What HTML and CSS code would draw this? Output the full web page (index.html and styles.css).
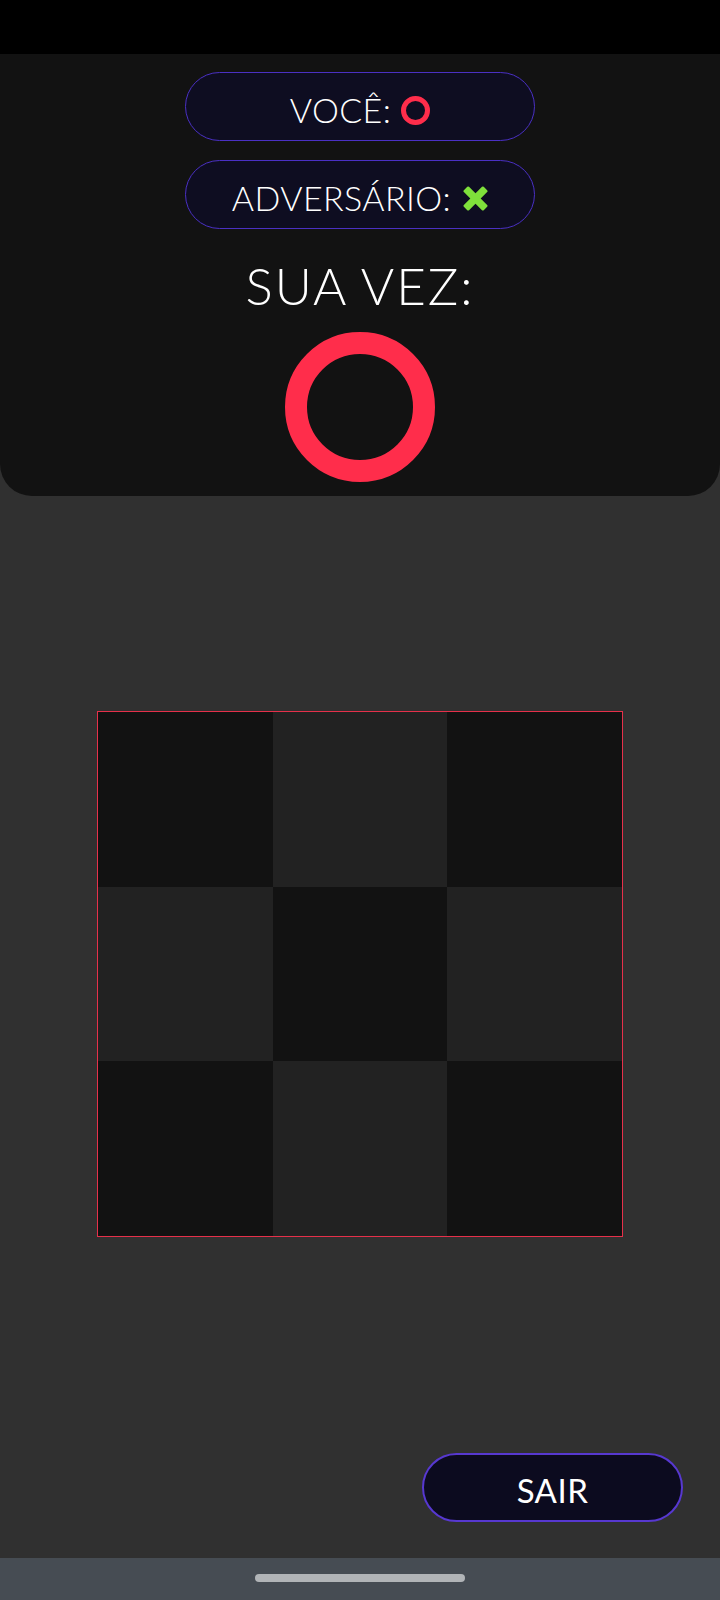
FILE: index.html
```html
<!DOCTYPE html>
<html lang="pt">
<head>
<meta charset="utf-8">
<link rel="stylesheet" href="styles.css">
</head>
<body>
<div class="screen">
  <div class="statusbar"></div>
  <header class="panel">
    <div class="pill">
      <span class="pill-text">VOCÊ:</span>
      <span class="mini-o"></span>
    </div>
    <div class="pill">
      <span class="pill-text">ADVERSÁRIO:</span>
      <svg class="mini-x" viewBox="0 0 24 24" width="25" height="25">
        <g fill="#7fe03b" transform="rotate(45 12 12)">
          <rect x="8.5" y="-1.5" width="7" height="27" rx="1.2"/>
          <rect x="-1.5" y="8.5" width="27" height="7" rx="1.2"/>
        </g>
      </svg>
    </div>
    <div class="turn-label">SUA VEZ:</div>
    <div class="big-o"></div>
  </header>
  <main class="main">
    <div class="board">
      <div class="cell dark"></div>
      <div class="cell light"></div>
      <div class="cell dark"></div>
      <div class="cell light"></div>
      <div class="cell dark"></div>
      <div class="cell light"></div>
      <div class="cell dark"></div>
      <div class="cell light"></div>
      <div class="cell dark"></div>
    </div>
    <button class="exit">SAIR</button>
  </main>
  <div class="navbar"><div class="handle"></div></div>
</div>
</body>
</html>
```
FILE: styles.css
```css
html, body {
  margin: 0;
  padding: 0;
  background: #303030;
}
.screen {
  width: 720px;
  height: 1600px;
  display: flex;
  flex-direction: column;
  background: #303030;
  font-family: "Lato", "Open Sans", sans-serif;
  color: #ffffff;
}
.statusbar {
  height: 54px;
  background: #000000;
  flex: none;
}
.panel {
  flex: none;
  height: 442px;
  box-sizing: border-box;
  background: #121212;
  border-radius: 0 0 32px 32px;
  display: flex;
  flex-direction: column;
  align-items: center;
  padding-top: 18px;
}
.pill {
  width: 350px;
  height: 69px;
  box-sizing: border-box;
  border: 1px solid #4a30c4;
  border-radius: 35px;
  background: #0e0d21;
  display: flex;
  align-items: center;
  justify-content: center;
  gap: 10px;
  padding-top: 7px;
  margin-bottom: 19px;
}
.pill-text {
  font-size: 34px;
  font-weight: 300;
  letter-spacing: 0.4px;
  line-height: 1;
}
.mini-o {
  width: 29px;
  height: 29px;
  box-sizing: border-box;
  border: 5px solid #ff2d4b;
  border-radius: 50%;
}
.mini-x {
  display: block;
  margin-left: 2px;
}
.turn-label {
  font-size: 51px;
  font-weight: 300;
  line-height: 1;
  margin-top: 12px;
  letter-spacing: 2px;
}
.big-o {
  width: 150px;
  height: 150px;
  box-sizing: border-box;
  border: 22px solid #ff2d4b;
  border-radius: 50%;
  margin-top: 21px;
}
.main {
  flex: 1;
  display: flex;
  flex-direction: column;
  align-items: center;
  padding-top: 215px;
}
.board {
  width: 526px;
  height: 526px;
  box-sizing: border-box;
  border: 1px solid #e6304a;
  display: grid;
  grid-template-columns: repeat(3, 1fr);
  grid-template-rows: repeat(3, 1fr);
}
.cell.dark { background: #121212; }
.cell.light { background: #222222; }
.exit {
  margin-top: auto;
  margin-bottom: 36px;
  align-self: flex-end;
  margin-right: 37px;
  width: 261px;
  height: 69px;
  border: 2px solid #5738d0;
  border-radius: 35px;
  background: #0c0b1f;
  color: #ffffff;
  font-family: "Lato", "Open Sans", sans-serif;
  font-size: 33px;
  font-weight: 400;
  letter-spacing: 0.5px;
  padding: 4px 0 0 0;
}
.navbar {
  flex: none;
  height: 42px;
  background: #464c53;
  display: flex;
  justify-content: center;
  padding-top: 16px;
  box-sizing: border-box;
}
.handle {
  width: 210px;
  height: 8px;
  border-radius: 4px;
  background: #b1b4b7;
}
```
